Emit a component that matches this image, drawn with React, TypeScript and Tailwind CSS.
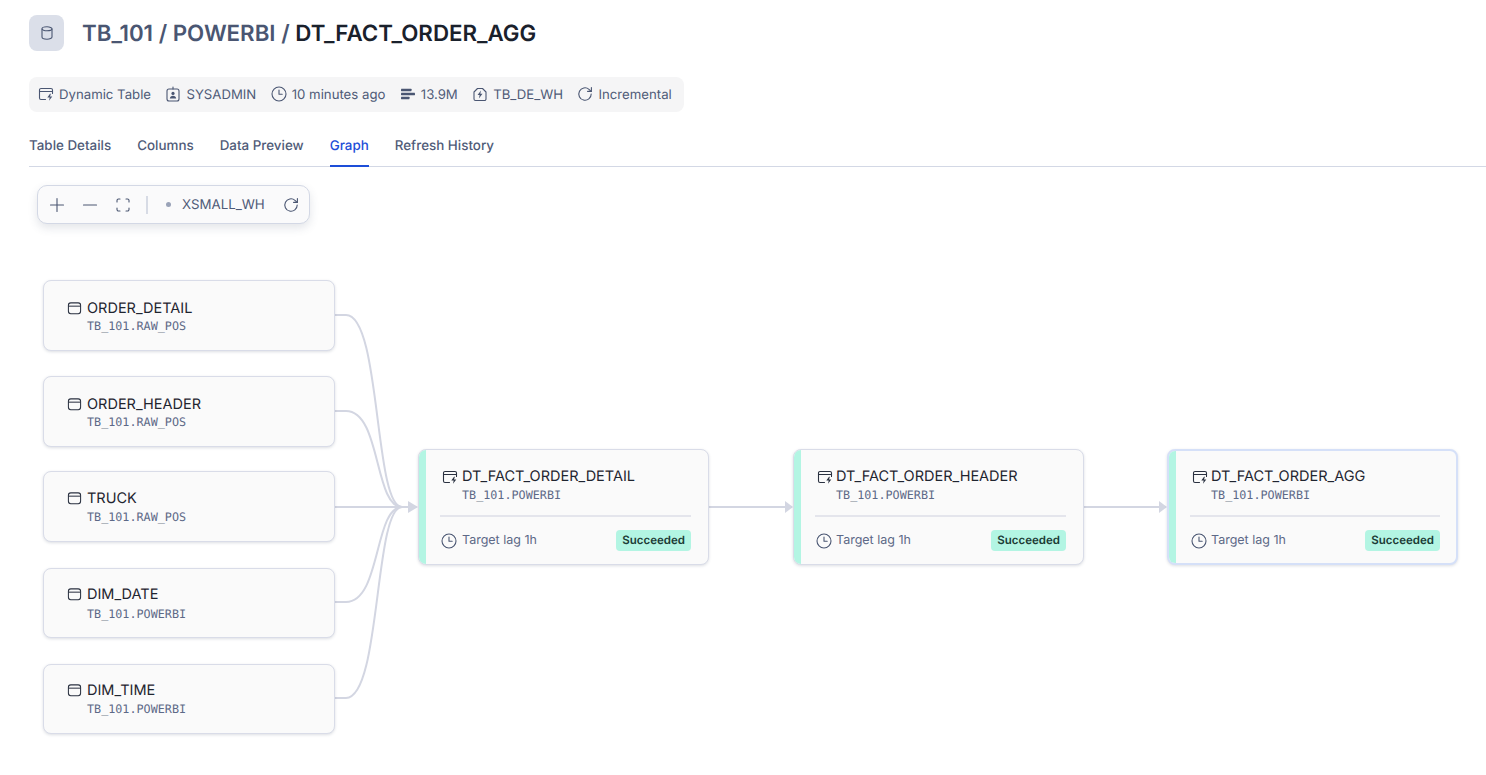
import React from "react";

const S = "#4a5672";

function DynIcon({ c = S, size = 16 }: { c?: string; size?: number }) {
  return (
    <svg width={size} height={size} viewBox="0 0 16 16" fill="none" stroke={c} strokeWidth="1.1" strokeLinecap="round" strokeLinejoin="round" className="shrink-0">
      <path d="M7.500 13.500H3a1.500 1.500 0 0 1-1.500-1.500V4A1.500 1.500 0 0 1 3 2.500h10A1.500 1.500 0 0 1 14.500 4v3.500" />
      <path d="M1.500 5.500h13" />
      <path d="M12 7.800 9.300 11.400h2.400l-.7 3.400 3.300-4.300h-2.300l.9-2.700z" fill={c} stroke="none" />
    </svg>
  );
}

function TableIcon() {
  return (
    <svg width="15" height="15" viewBox="0 0 16 16" fill="none" stroke="#2a3140" strokeWidth="1.1" className="-mt-[2px] shrink-0">
      <rect x="1.500" y="2" width="13" height="11.500" rx="2.500" />
      <path d="M1.500 5.500h13" />
    </svg>
  );
}

function Clock({ c = S }: { c?: string }) {
  return (
    <svg width="16" height="16" viewBox="0 0 16 16" fill="none" stroke={c} strokeWidth="1.1" strokeLinecap="round" strokeLinejoin="round" className="shrink-0">
      <circle cx="8" cy="8" r="7" />
      <path d="M8 4v4.200h3.200" />
    </svg>
  );
}

function Refresh({ c = S }: { c?: string }) {
  return (
    <svg width="16" height="16" viewBox="0 0 16 16" fill="none" stroke={c} strokeWidth="1.1" strokeLinecap="round" strokeLinejoin="round" className="shrink-0">
      <path d="M14.200 8A6.200 6.200 0 1 1 12 3.300l2.200 2" />
      <path d="M14.400 1.600v3.800h-3.800" />
    </svg>
  );
}

function Meta({ icon, label }: { icon: React.ReactNode; label: string }) {
  return (
    <div className="flex items-center gap-[5px]">
      {icon}
      <span className="pt-[2px]">{label}</span>
    </div>
  );
}

const tables = [
  { name: "ORDER_DETAIL", sub: "TB_101.RAW_POS", top: 113, h: 71, pt: "pt-[19px]", gap: "mt-[1px]" },
  { name: "ORDER_HEADER", sub: "TB_101.RAW_POS", top: 209, h: 71, pt: "pt-[19px]", gap: "mt-[1px]" },
  { name: "TRUCK", sub: "TB_101.RAW_POS", top: 304, h: 71, pt: "pt-[18px]", gap: "mt-[2px]" },
  { name: "DIM_DATE", sub: "TB_101.POWERBI", top: 401, h: 70, pt: "pt-[17px]", gap: "mt-[3px]" },
  { name: "DIM_TIME", sub: "TB_101.POWERBI", top: 497, h: 70, pt: "pt-[17px]", gap: "mt-[2px]" },
];

const dts = [
  { name: "DT_FACT_ORDER_DETAIL", left: 389, selected: false, gap: "gap-[4px]", sub: "pl-[22px]", lag: "ml-[5px]" },
  { name: "DT_FACT_ORDER_HEADER", left: 764, selected: false, gap: "gap-[3px]", sub: "pl-[21px]", lag: "ml-[4px]" },
  { name: "DT_FACT_ORDER_AGG", left: 1138, selected: true, gap: "gap-[3px]", sub: "pl-[21px]", lag: "ml-[4px]" },
];

const mono = "font-['DejaVu_Sans_Mono',monospace] text-[11.75px] leading-[14px] text-[#5d6987]";

export default function App() {
  return (
    <div className="h-[775px] w-[1486px] overflow-hidden bg-white pl-[29px] font-['Inter',sans-serif] [font-optical-sizing:none] [text-rendering:geometricPrecision]">
      <div className="flex h-[51px] items-end">
        <div className="flex h-[36px] w-[35px] items-center justify-center rounded-lg bg-[#dbdfe9]">
          <svg width="16" height="16" viewBox="0 0 16 16" fill="none" stroke={S} strokeWidth="1.1">
            <ellipse cx="8" cy="3.800" rx="5" ry="2" />
            <path d="M3 3.800v8.200c0 1.200 2.200 2.200 5 2.200s5-1 5-2.200V3.800" />
          </svg>
        </div>
        <h1 className="ml-[18px] h-[36px] pt-px text-[22.3px] font-semibold leading-[36px] text-[#4a5672]">
          TB_101 / POWERBI / <span className="text-[#1a212c]">DT_FACT_ORDER_AGG</span>
        </h1>
      </div>

      <div className="mt-[26px] flex h-[35px] w-[655px] items-center gap-[14.4px] rounded-lg bg-[#f5f5f6] pl-[9px] text-[13.2px] text-[#4f5b78]">
        <Meta icon={<DynIcon />} label="Dynamic Table" />
        <Meta
          icon={
            <svg width="16" height="16" viewBox="0 0 16 16" fill="none" stroke={S} strokeWidth="1.1" strokeLinecap="round" className="shrink-0">
              <rect x="2" y="3" width="12" height="12" rx="2" />
              <path d="M8 1v2" />
              <circle cx="8" cy="7.400" r="1.600" fill={S} stroke="none" />
              <path d="M4.800 12.500c.3-2 1.500-2.800 3.200-2.800s2.900.8 3.200 2.800z" fill={S} stroke="none" />
            </svg>
          }
          label="SYSADMIN"
        />
        <Meta icon={<Clock />} label="10 minutes ago" />
        <Meta
          icon={
            <svg width="16" height="16" viewBox="0 0 16 16" fill={S} className="shrink-0">
              <rect x="1" y="2.800" width="10.500" height="2.400" rx="0.400" />
              <rect x="1" y="6.800" width="14" height="2.400" rx="0.400" />
              <rect x="1" y="10.800" width="8.500" height="2.400" rx="0.400" />
            </svg>
          }
          label="13.9M"
        />
        <Meta
          icon={
            <svg width="16" height="16" viewBox="0 0 16 16" fill="none" stroke={S} strokeWidth="1.1" strokeLinejoin="round" className="shrink-0">
              <path d="M2 6 5.500 2.500h5L14 6v7a1.500 1.500 0 0 1-1.500 1.500h-9A1.500 1.500 0 0 1 2 13z" />
              <path d="M9 4.400 5.500 9h2.100l-.7 3.400L10.500 7.800H8.300z" fill={S} stroke="none" />
            </svg>
          }
          label="TB_DE_WH"
        />
        <Meta icon={<Refresh />} label="Incremental" />
      </div>

      <div className="mt-[15px] flex h-[40px] items-stretch gap-[26px] border-b border-[#d3d8e5] text-[13.4px] font-medium text-[#4f5b78]">
        {["Table Details", "Columns", "Data Preview", "Graph", "Refresh History"].map((t) => (
          <div
            key={t}
            className={
              t === "Graph"
                ? "-mb-px flex items-center border-b-2 border-[#1d4ed8] text-[#1d4ed8]"
                : "flex items-center"
            }
          >
            {t}
          </div>
        ))}
      </div>

      <div className="relative h-[608px]">
        <div className="absolute left-[8px] top-[18px] flex h-[39px] w-[273px] items-center rounded-[10px] border border-[#d3d8e5] bg-[#fafafb] pl-[11px] text-[13.3px] text-[#4f5b78] shadow-[0_4px_10px_rgba(60,70,100,0.14)]">
          <svg width="16" height="16" viewBox="0 0 16 16" fill="none" stroke={S} strokeWidth="1.1" strokeLinecap="round" className="shrink-0">
            <path d="M8 1.500v13M1.500 8h13" />
          </svg>
          <svg width="16" height="16" viewBox="0 0 16 16" fill="none" stroke={S} strokeWidth="1.1" strokeLinecap="round" className="ml-[17px] shrink-0">
            <path d="M1.500 8h13" />
          </svg>
          <svg width="16" height="16" viewBox="0 0 16 16" fill="none" stroke={S} strokeWidth="1.1" strokeLinecap="round" strokeLinejoin="round" className="ml-[17px] shrink-0">
            <path d="M2 5V3.500A1.500 1.500 0 0 1 3.500 2H5M11 2h1.500A1.500 1.500 0 0 1 14 3.500V5M14 11v1.500a1.500 1.500 0 0 1-1.500 1.500H11M5 14H3.500A1.500 1.500 0 0 1 2 12.500V11" />
          </svg>
          <div className="ml-[15px] h-[18px] w-[2px] bg-[#d7dbe5]" />
          <div className="ml-[18px] h-[5px] w-[5px] rounded-full bg-[#9aa3b8]" />
          <span className="ml-[11px] pt-[2px]">XSMALL_WH</span>
          <div className="ml-auto pr-[10px]">
            <Refresh />
          </div>
        </div>

        <svg className="absolute left-0 top-0" width="1457" height="608" viewBox="0 0 1457 608" fill="none" stroke="#d3d6e2" strokeWidth="2">
          <path d="M305 148H317C352 148 345 340 373 340" />
          <path d="M305 244H317C352 244 345 340 373 340" />
          <path d="M305 340H379" />
          <path d="M305 435H317C352 435 345 340 373 340" />
          <path d="M305 531H317C352 531 345 340 373 340" />
          <path d="M680 340H757" />
          <path d="M1055 340H1131" />
          <g fill="#d3d6e2" stroke="none">
            <path d="M379 334l10 6-10 6z" />
            <path d="M756 334l8 6-8 6z" />
            <path d="M1130 334l8 6-8 6z" />
          </g>
        </svg>

        {tables.map((t) => (
          <div
            key={t.name}
            className={
              "absolute left-[14px] w-[292px] rounded-lg border border-[#d9dce8] bg-[#fafafa] pl-[23px] shadow-[0_1px_3px_rgba(60,70,100,0.18)] " +
              t.pt
            }
            style={{ top: t.top, height: t.h }}
          >
            <div className="flex h-[18px] items-center gap-[5px] text-[14.5px] leading-[18px] text-[#1f2530]">
              <TableIcon />
              <span>{t.name}</span>
            </div>
            <div className={"pl-[20px] " + t.gap + " " + mono}>{t.sub}</div>
          </div>
        ))}

        {dts.map((d) => (
          <div
            key={d.name}
            className={
              "absolute top-[282px] flex h-[116px] w-[291px] overflow-hidden rounded-lg border bg-[#fafafa] shadow-[0_1px_3px_rgba(60,70,100,0.18)] " +
              (d.selected ? "border-2 border-[#d5e0f8]" : "border-[#d9dce8]")
            }
            style={{ left: d.left }}
          >
            <div className="h-full w-[7px] shrink-0 bg-[#b3f5e3]" />
            <div className={"flex-1 pl-[14px] " + (d.selected ? "pr-[16px] pt-[17px]" : "pr-[17px] pt-[18px]")}>
              <div className={"flex h-[18px] items-center pl-[2px] text-[14.5px] leading-[18px] text-[#1f2530] " + d.gap}>
                <DynIcon c="#2a3140" />
                <span>{d.name}</span>
              </div>
              <div className={"mt-[2px] " + d.sub + " " + mono}>TB_101.POWERBI</div>
              <div className="mt-[13px] h-[2px] bg-[#e4e5ec]" />
              <div className="mt-[13px] flex h-[21px] items-center pl-[1px]">
                <Clock />
                <span className={"pt-[2px] text-[12.5px] text-[#5d6987] " + d.lag}>Target lag 1h</span>
                <span className="ml-auto flex h-[21px] items-center rounded-[4px] bg-[#b3f5e3] px-[6px] text-[11.5px] font-semibold text-[#1c3b36]">
                  Succeeded
                </span>
              </div>
            </div>
          </div>
        ))}
      </div>
    </div>
  );
}
